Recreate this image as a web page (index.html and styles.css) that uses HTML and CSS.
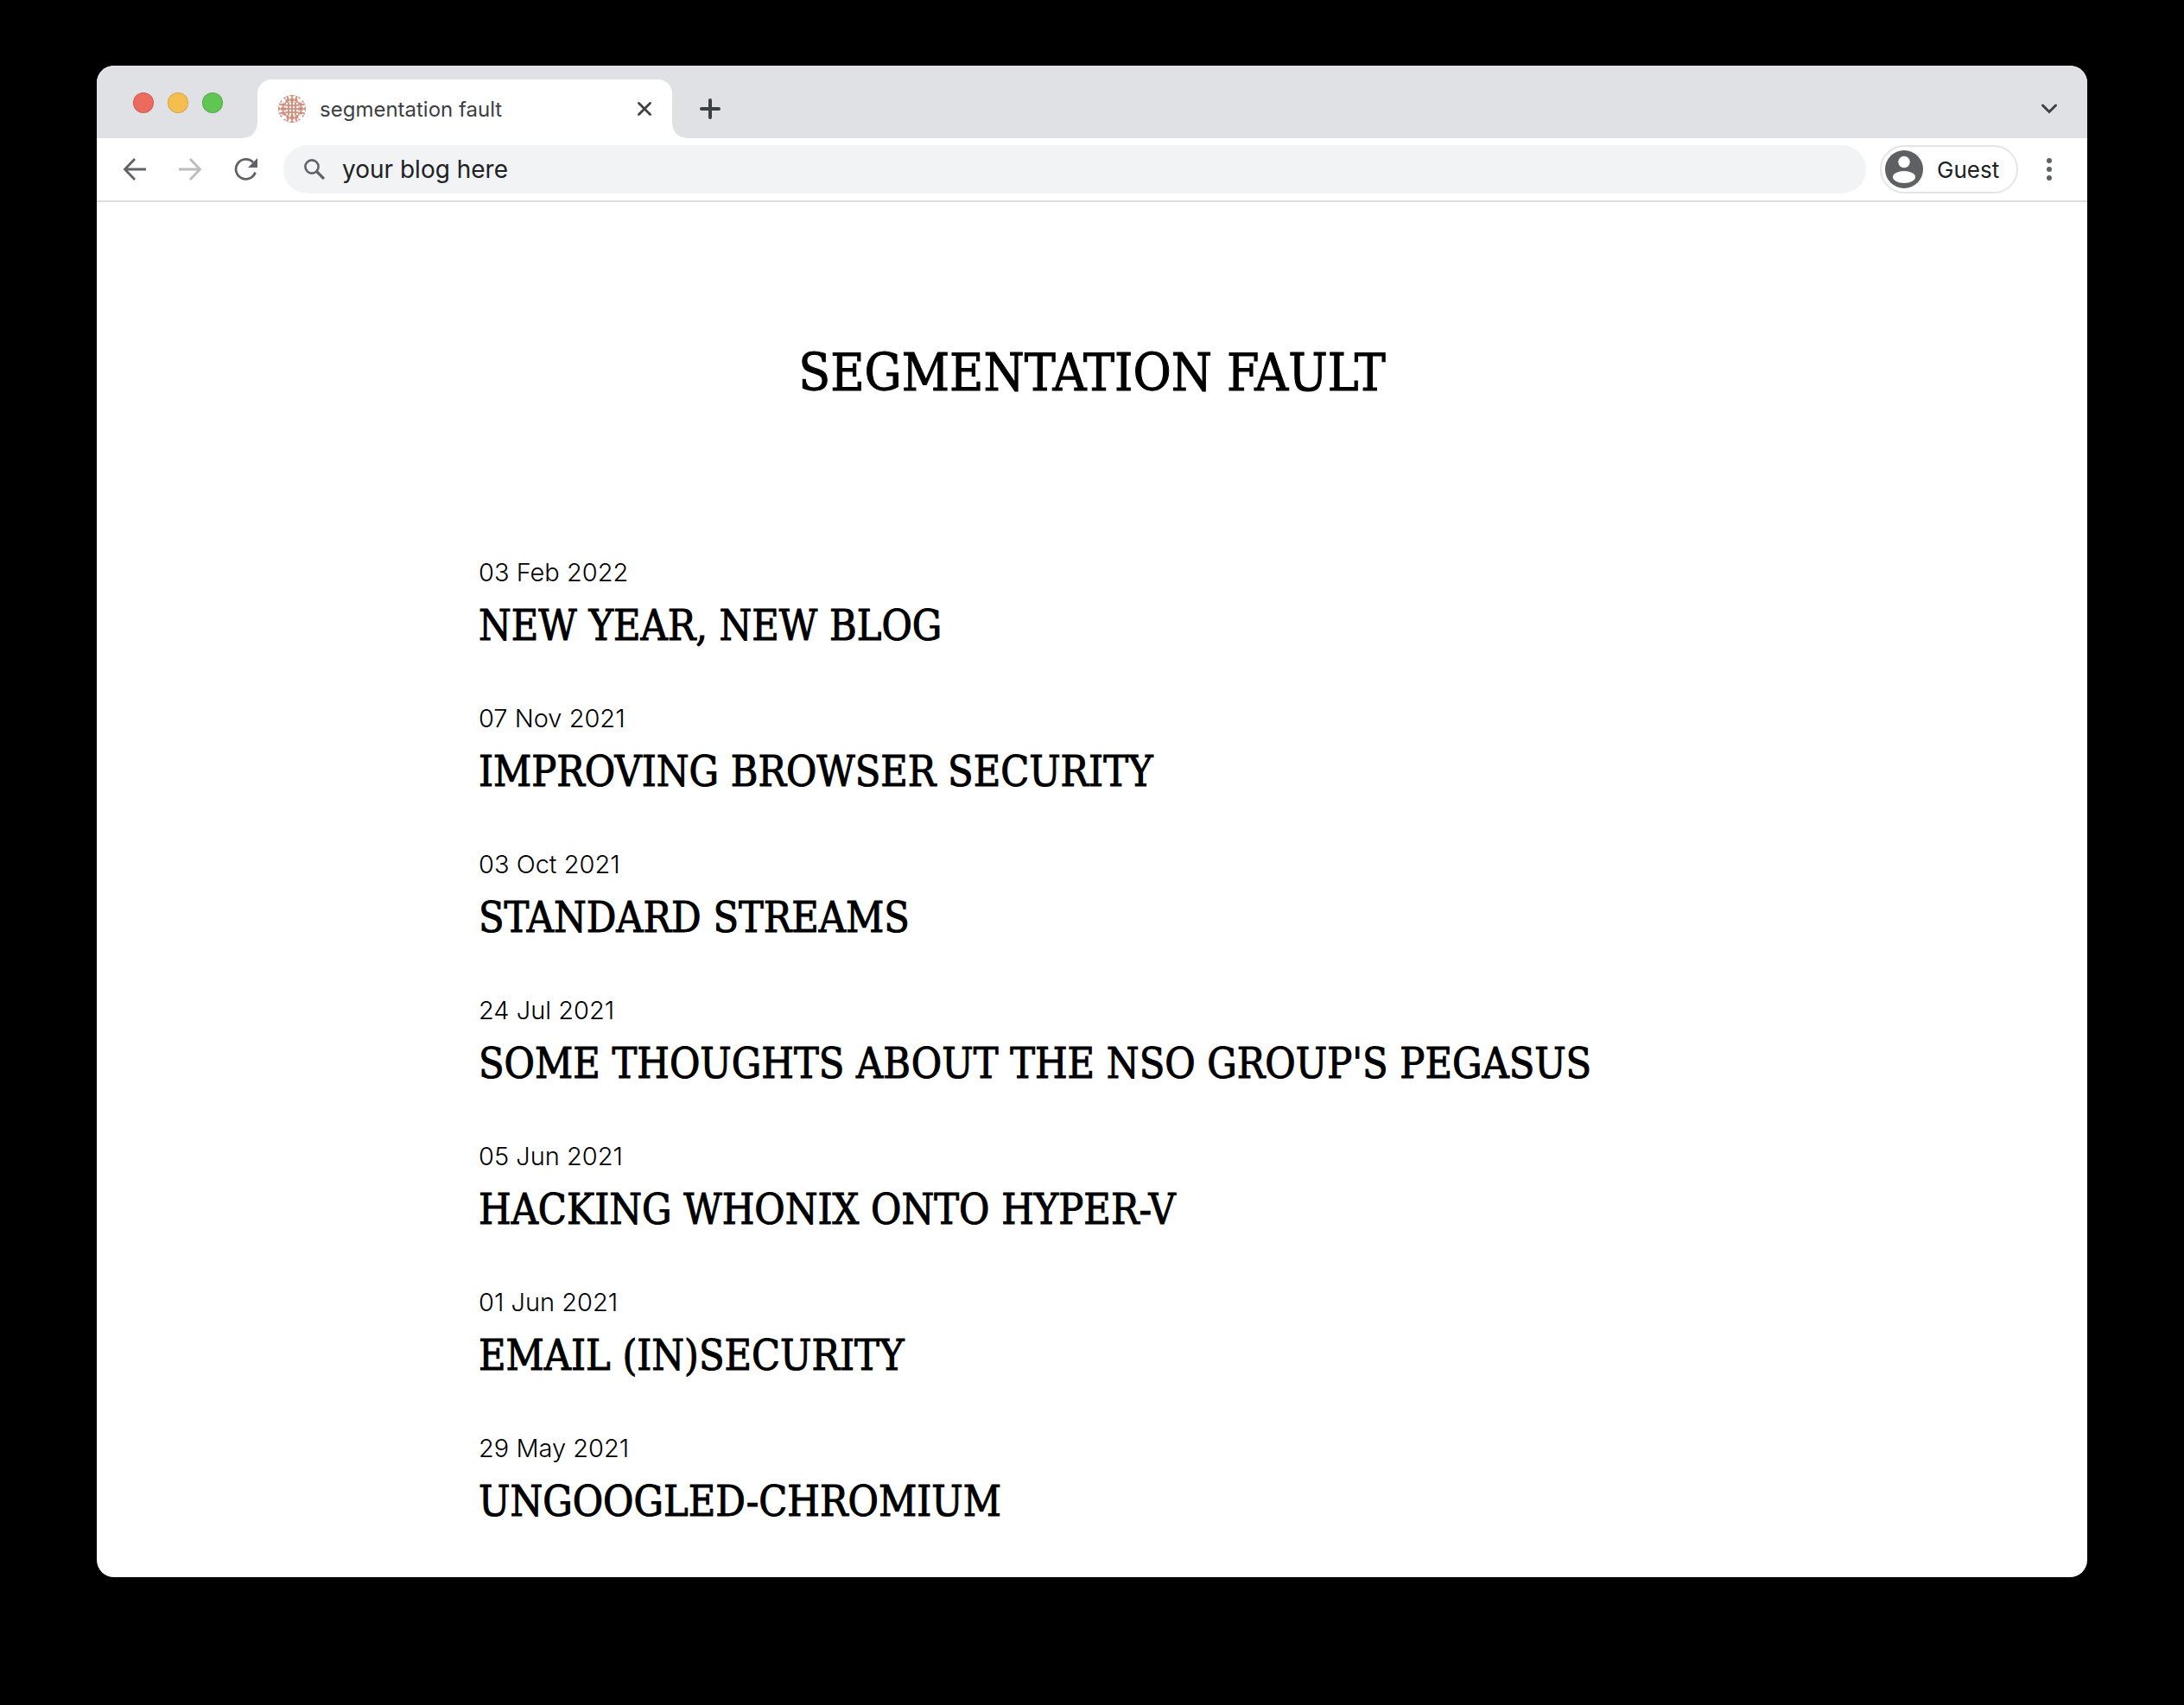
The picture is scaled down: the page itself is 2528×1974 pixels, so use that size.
FILE: index.html
```html
<!DOCTYPE html>
<html lang="en">
<head>
<meta charset="utf-8">
<title>segmentation fault</title>
<link rel="stylesheet" href="styles.css">
</head>
<body>
<div class="window">
  <header class="tabstrip">
    <div class="lights">
      <button class="light light-close" aria-label="Close window"></button>
      <button class="light light-min" aria-label="Minimize window"></button>
      <button class="light light-max" aria-label="Zoom window"></button>
    </div>
    <div class="tab">
      <svg class="favicon" viewBox="0 0 32 32" aria-hidden="true">
        <defs>
          <g id="quarter">
            <path d="M11 0L13 5.500L15.600 2.400L14 1Z M21 0L19 5.500L16.400 2.400L18 1Z"/>
            <path d="M3 3L9.500 5L7.500 9.500L5 9.500Z M1 9L6 8L4 10.500Z M9 1L8 6L10.500 4Z"/>
            <path d="M11.500 8.500L13.300 6L15 8.500Z M17 8.500L18.700 6L20.500 8.500Z"/>
          </g>
        </defs>
        <circle cx="16" cy="16" r="16" fill="#d38f7e"/>
        <g fill="#fff">
          <use href="#quarter"/>
          <use href="#quarter" transform="rotate(90 16 16)"/>
          <use href="#quarter" transform="rotate(180 16 16)"/>
          <use href="#quarter" transform="rotate(270 16 16)"/>
        </g>
        <g stroke="#fff" stroke-width="2.4" stroke-linecap="round" stroke-dasharray="0 4">
          <path d="M10 10H22.100M10 14H22.100M10 18H22.100M10 22H22.100"/>
        </g>
      </svg>
      <span class="tab-title">segmentation fault</span>
      <button class="icon-button" aria-label="Close tab">
        <svg width="16" height="16" viewBox="0 0 16 16"><path d="M1.500 1.500L14.500 14.500M14.500 1.500L1.500 14.500" stroke="#3c4043" stroke-width="2.8" stroke-linecap="round"/></svg>
      </button>
    </div>
    <button class="icon-button new-tab" aria-label="New tab">
      <svg width="24" height="24" viewBox="0 0 24 24"><path d="M12 2V22M2 12H22" stroke="#3c4043" stroke-width="4" stroke-linecap="round"/></svg>
    </button>
    <button class="icon-button tab-search" aria-label="Search tabs">
      <svg width="20" height="12" viewBox="0 0 20 12"><path d="M2.500 2L10 9.500L17.500 2" fill="none" stroke="#3c4043" stroke-width="3" stroke-linecap="round"/></svg>
    </button>
  </header>
  <div class="toolbar">
    <nav class="nav">
      <button class="icon-button" aria-label="Back">
        <svg width="28" height="28" viewBox="0 0 28 28"><path d="M27 14H3M14 2L2.500 14L14 26" fill="none" stroke="#5f6368" stroke-width="2.8"/></svg>
      </button>
      <button class="icon-button" aria-label="Forward" disabled>
        <svg width="28" height="28" viewBox="0 0 28 28"><path d="M1 14H25M14 2L25.500 14L14 26" fill="none" stroke="#babcbe" stroke-width="2.8"/></svg>
      </button>
      <button class="icon-button" aria-label="Reload">
        <svg width="28" height="28" viewBox="0 0 28 28"><path d="M25.500 17.500A11.500 11.500 0 1 1 23 6" fill="none" stroke="#5f6368" stroke-width="2.8"/><path d="M28 1V12H17Z" fill="#5f6368"/></svg>
      </button>
    </nav>
    <label class="omnibox">
      <svg width="24" height="24" viewBox="0 0 24 24" aria-hidden="true"><circle cx="9" cy="9" r="7.600" fill="none" stroke="#5f6368" stroke-width="2.6"/><path d="M14.500 14.500L23 23" stroke="#5f6368" stroke-width="3.2"/></svg>
      <input class="omnibox-input" type="text" value="your blog here" aria-label="Address">
    </label>
    <button class="guest">
      <svg width="44" height="44" viewBox="0 0 44 44" aria-hidden="true"><circle cx="22" cy="22" r="22" fill="#5f6063"/><circle cx="22" cy="13.500" r="6.800" fill="#fff"/><ellipse cx="22" cy="31" rx="13" ry="7" fill="#fff"/></svg>
      Guest
    </button>
    <button class="icon-button menu" aria-label="Menu">
      <svg width="8" height="28" viewBox="0 0 8 28" fill="#5f6368"><circle cx="4" cy="4" r="3"/><circle cx="4" cy="14" r="3"/><circle cx="4" cy="24" r="3"/></svg>
    </button>
  </div>
  <main class="page">
    <h1 class="site-title">SEGMENTATION FAULT</h1>
    <ul class="posts">
      <li><time class="date" datetime="2022-02-03">03 Feb 2022</time><h2 class="post-title"><a href="#">NEW YEAR, NEW BLOG</a></h2></li>
      <li><time class="date" datetime="2021-11-07">07 Nov 2021</time><h2 class="post-title"><a href="#">IMPROVING BROWSER SECURITY</a></h2></li>
      <li><time class="date" datetime="2021-10-03">03 Oct 2021</time><h2 class="post-title"><a href="#">STANDARD STREAMS</a></h2></li>
      <li><time class="date" datetime="2021-07-24">24 Jul 2021</time><h2 class="post-title"><a href="#">SOME THOUGHTS ABOUT THE NSO GROUP'S PEGASUS</a></h2></li>
      <li><time class="date" datetime="2021-06-05">05 Jun 2021</time><h2 class="post-title"><a href="#">HACKING WHONIX ONTO HYPER-V</a></h2></li>
      <li><time class="date" datetime="2021-06-01">01 Jun 2021</time><h2 class="post-title"><a href="#">EMAIL (IN)SECURITY</a></h2></li>
      <li><time class="date" datetime="2021-05-29">29 May 2021</time><h2 class="post-title"><a href="#">UNGOOGLED-CHROMIUM</a></h2></li>
    </ul>
  </main>
</div>
</body>
</html>
```
FILE: styles.css
```css
* { box-sizing: border-box; }

body {
  margin: 0;
  padding: 76px 112px 148px;
  background: #000;
  color: #000;
  font-family: Inter, sans-serif;
}

button {
  margin: 0;
  padding: 0;
  border: 0;
  background: none;
  font: inherit;
}

svg { display: block; flex: none; }

.window {
  overflow: hidden;
  border-radius: 20px;
  background: #fff;
}

.tabstrip {
  display: flex;
  align-items: flex-end;
  height: 84px;
  background: #dfe1e5;
}

.lights {
  display: flex;
  gap: 16px;
  width: 186px;
  padding: 0 0 29px 42px;
}

.light {
  width: 24px;
  height: 24px;
  border: 1px solid #0002;
  border-radius: 50%;
}

.light-close { background: #ed6a5e; }
.light-min { background: #f5bf4f; }
.light-max { background: #61c554; }

.tab {
  position: relative;
  display: flex;
  align-items: center;
  width: 480px;
  height: 68px;
  padding: 0 24px;
  border-radius: 16px 16px 0 0;
  background: #fff;
}

/* flared feet where the tab meets the toolbar */
.tab::before,
.tab::after {
  content: "";
  position: absolute;
  bottom: 0;
  width: 16px;
  height: 16px;
}

.tab::before {
  right: 100%;
  background: radial-gradient(circle at 0 0, #dfe1e5 15px, #fff 16px);
}

.tab::after {
  left: 100%;
  background: radial-gradient(circle at 100% 0, #dfe1e5 15px, #fff 16px);
}

.favicon { width: 32px; height: 32px; }

.tab-title {
  flex: 1;
  padding-left: 16px;
  color: #3c4043;
  font-size: 24px;
}

.icon-button {
  display: flex;
  align-items: center;
  justify-content: center;
}

.new-tab { height: 68px; margin-left: 32px; }
.tab-search { height: 68px; margin: 0 34px 0 auto; }

.toolbar {
  display: flex;
  align-items: center;
  height: 74px;
  padding: 0 40px 0 30px;
  border-bottom: 2px solid #dcdddf;
}

.nav { display: flex; gap: 36px; }

.omnibox {
  display: flex;
  flex: 1;
  align-items: center;
  gap: 20px;
  height: 56px;
  margin: 0 16px 0 30px;
  padding: 0 24px;
  border-radius: 28px;
  background: #f1f3f4;
}

.omnibox-input {
  flex: 1;
  padding: 0;
  border: 0;
  outline: 0;
  background: none;
  color: #202124;
  font: 28px Inter, sans-serif;
}

.guest {
  display: flex;
  align-items: center;
  gap: 16px;
  width: 160px;
  height: 56px;
  padding-left: 4px;
  border: 2px solid #e4e5e7;
  border-radius: 28px;
  color: #202124;
  font-size: 26px;
}

.menu { margin-left: 32px; }

.page { padding: 149px 40px 52px; }

.site-title,
.post-title {
  margin: 0;
  font-family: "DejaVu Serif Condensed", "DejaVu Serif", serif;
  font-weight: 400;
  -webkit-text-stroke: 1px #000;
}

.site-title {
  font-size: 60px;
  line-height: 96px;
  text-align: center;
}

.posts {
  display: flex;
  flex-direction: column;
  gap: 48px;
  max-width: 1420px;
  margin: 160px auto 0;
  padding: 0;
  list-style: none;
}

.date {
  display: block;
  font-size: 29px;
  font-weight: 300;
  line-height: 48px;
}

.post-title {
  padding-top: 1px;
  font-size: 48px;
  line-height: 72px;
}

.post-title a { color: inherit; text-decoration: none; }
```
